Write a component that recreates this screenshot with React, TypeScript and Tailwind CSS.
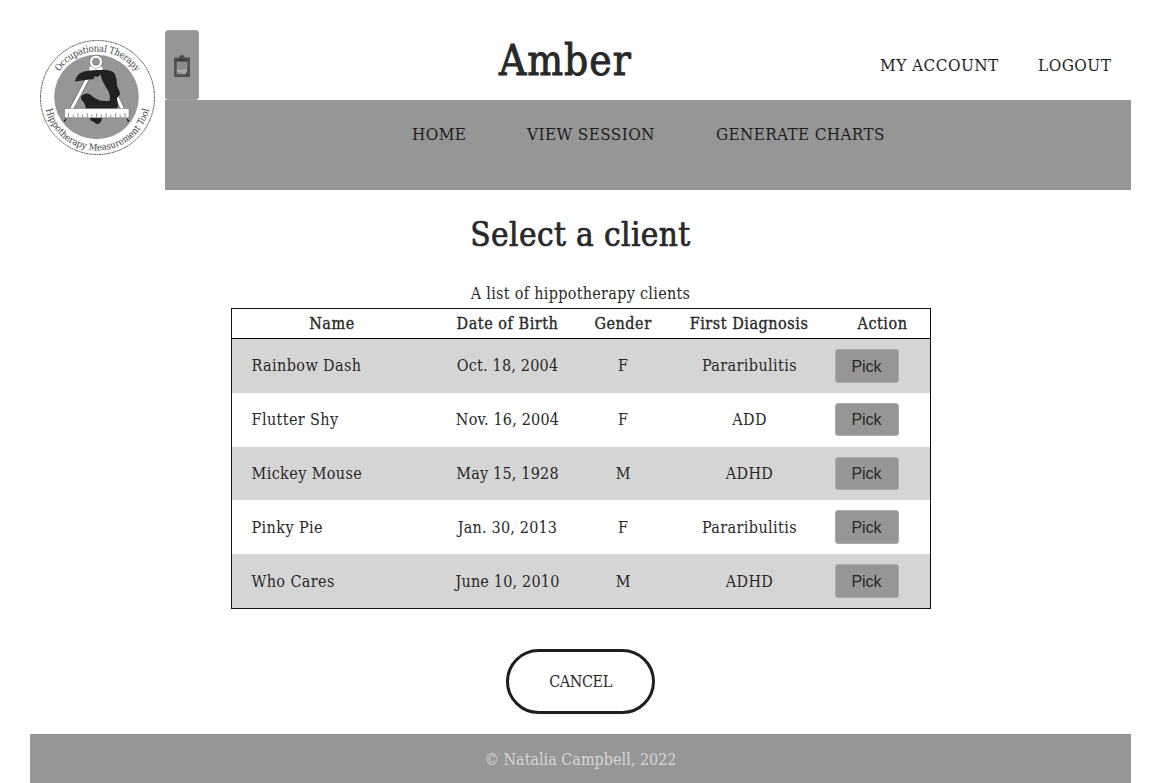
const clients = [
  { name: 'Rainbow Dash', dob: 'Oct. 18, 2004', gender: 'F', diagnosis: 'Pararibulitis' },
  { name: 'Flutter Shy', dob: 'Nov. 16, 2004', gender: 'F', diagnosis: 'ADD' },
  { name: 'Mickey Mouse', dob: 'May 15, 1928', gender: 'M', diagnosis: 'ADHD' },
  { name: 'Pinky Pie', dob: 'Jan. 30, 2013', gender: 'F', diagnosis: 'Pararibulitis' },
  { name: 'Who Cares', dob: 'June 10, 2010', gender: 'M', diagnosis: 'ADHD' },
];

function Logo() {
  const ticks = Array.from({ length: 13 }, (_, i) => 28.5 + i * 4.7);
  return (
    <svg viewBox="0 0 115 115" className="h-[115px] w-[115px]" aria-label="Occupational Therapy Hippotherapy Measurement Tool">
      <defs>
        <path id="upper" d="M 11.5 57.5 A 46 46 0 0 1 103.5 57.5" />
        <path id="lower" d="M 4.5 57.5 A 53 53 0 0 0 110.5 57.5" />
      </defs>
      <circle cx="57.5" cy="57.5" r="57" fill="#fff" stroke="#555" strokeWidth="1" strokeDasharray="2 .6" />
      <circle cx="56.5" cy="57" r="42.3" fill="#969696" />
      <text fontSize="9.4" fill="#444" fontFamily="'DejaVu Serif Condensed', 'DejaVu Serif', serif">
        <textPath href="#upper" startOffset="50%" textAnchor="middle" textLength="90">Occupational Therapy</textPath>
      </text>
      <text fontSize="9.4" fill="#444" fontFamily="'DejaVu Serif Condensed', 'DejaVu Serif', serif">
        <textPath href="#lower" startOffset="50%" textAnchor="middle" textLength="142">Hippotherapy Measurement Tool</textPath>
      </text>
      <path d="M50 34 L31 70 M66 34 L83 70" stroke="#666" strokeWidth="4.4" />
      <path d="M50 34 L31 70 M66 34 L83 70" stroke="#fff" strokeWidth="3" />
      <path d="M49 31 V27 L53 24 H60 L63 28 V31Z" fill="#fff" stroke="#777" strokeWidth=".5" />
      <circle cx="56" cy="21.7" r="5" fill="#969696" stroke="#666" strokeWidth="3.8" />
      <circle cx="56" cy="21.7" r="5" fill="none" stroke="#fff" strokeWidth="2.6" />
      <path d="M52 38 L59 34 L63 40 L70 52 L70 64 L58 62 L48 55 L44 52 Q47 45 52 38Z" fill="#969696" />
      <path d="M35 41.5 Q36 34 44 31.5 Q52 29.5 60 30 Q71 29 75 34 Q77 39 77 46 Q80 51 80 54.5 L77 58 L78 65 L77 69 H46 Q45 63 42.5 61 Q39.5 58 42 55.5 Q46 52 50 54.5 Q55 59 60 60.5 Q66 61 69.5 61 Q71 56 68 50.5 Q65 46 62 40 L60.5 34.5 L57.5 37 L55 36 L53.5 39 Q43 40 35 41.5Z" fill="#222" />
      <rect x="24.5" y="68.5" width="64.5" height="9.3" fill="#fff" stroke="#666" strokeWidth=".5" />
      {ticks.map((x, i) => (
        <path key={x} d={`M${x} 77 v-${i % 2 ? 2.5 : 4}`} stroke="#777" strokeWidth=".8" />
      ))}
      <path d="M50 78 H62 Q61 84 57 84.3 L53 81.5 Q50 81 50 78 M27 78 L23.5 80.5 L25 82Z M86 78 L89.5 80.5 L88 82Z" fill="#222" />
    </svg>
  );
}

export default function App() {
  return (
    <div className="flex h-[783px] flex-col overflow-hidden bg-white px-[30px] pt-[30px] font-['DejaVu_Serif_Condensed','DejaVu_Serif',serif] text-[#282828]">
      <header className="flex h-40 shrink-0">
        <div className="w-[135px] p-2.5"><Logo /></div>
        <div className="flex flex-1 flex-col">
          <div className="flex h-[70px]">
            <button className="flex h-[70px] w-[34px] items-center justify-center rounded-[3px] border border-[#a2a2a2] bg-[#969696]" aria-label="Clipboard">
              <svg viewBox="0 0 18 24" className="mt-0.5 h-6 w-[18px] shrink-0">
                <path d="M1 3.5 H6 Q6.5 1 9 1 Q11.5 1 12 3.5 H17 V23 H1Z" fill="#505050" />
                <path d="M3.7 7.7 H14.3 V18 L12 20.3 H3.7Z" fill="#8c8c8c" />
                <path d="M4 15 L8 16 L13 15 L14 17 L12 20 L8 18.5 L4 18Z" fill="#aaa" />
                <path d="M4.5 5.8 H13.5" stroke="#383838" strokeWidth="1.5" />
              </svg>
            </button>
            <h1 className="ml-[300px] w-[133px] whitespace-nowrap text-[42px] leading-[62px] tracking-[1px] [-webkit-text-stroke:0.9px_#282828]">Amber</h1>
            <nav className="ml-auto flex gap-10 pr-5 text-[17px] leading-[70px] tracking-[0.47px] text-[#1e1e1e]">
              <a className="w-[119px] whitespace-nowrap pl-px">MY ACCOUNT</a>
              <a className="w-[73px] whitespace-nowrap">LOGOUT</a>
            </nav>
          </div>
          <nav className="flex h-[90px] gap-[60px] bg-[#969696] pl-[247px] text-[17px] leading-[69px] tracking-[0.4px] text-[#1e1e1e]">
            <a className="w-[55px] whitespace-nowrap">HOME</a>
            <a className="w-[129px] whitespace-nowrap">VIEW SESSION</a>
            <a className="w-[169px] whitespace-nowrap tracking-[0.33px]">GENERATE CHARTS</a>
          </nav>
        </div>
      </header>
      <main className="flex h-[544px] shrink-0 flex-col items-center">
        <h2 className="mt-5 h-12 whitespace-nowrap text-[33px] leading-[49px] tracking-[0.4px] [-webkit-text-stroke:0.7px_#282828]">Select a client</h2>
        <p className="mt-6 h-[26px] text-base leading-[23px] tracking-[0.3px]">A list of hippotherapy clients</p>
        <table className="h-[301px] w-[700px] table-fixed border-separate border-spacing-0 border border-[#111] text-center text-base">
          <colgroup>
            <col className="w-[200px]" /><col className="w-[151px]" /><col className="w-[80px]" /><col className="w-[172px]" /><col className="w-[95px]" />
          </colgroup>
          <thead>
            <tr className="h-[30px] tracking-[0.55px] [-webkit-text-stroke:0.35px_#282828]">
              {['Name', 'Date of Birth', 'Gender', 'First Diagnosis', 'Action'].map((title) => (
                <th key={title} className="whitespace-nowrap border-b border-black p-0 pl-px font-normal leading-[29px]">{title}</th>
              ))}
            </tr>
          </thead>
          <tbody>
            {clients.map((client) => (
              <tr key={client.name} className="h-[53.8px] odd:bg-[#d5d5d5]">
                <td className="p-0 pl-5 pt-[1.2px] text-left tracking-[0.4px]">{client.name}</td>
                <td className="p-0 pl-px pt-[1.2px] tracking-[0.2px]">{client.dob}</td>
                <td className="p-0 pl-px pt-[1.2px]">{client.gender}</td>
                <td className="p-0 pl-0.5 pt-[1.2px] tracking-[0.4px]">{client.diagnosis}</td>
                <td className="p-0 text-left">
                  <button className="block h-[33.6px] w-16 rounded-[3px] border border-[#aaa] bg-[#969696] pt-[0.5px] font-['Liberation_Sans',sans-serif] text-base leading-8">Pick</button>
                </td>
              </tr>
            ))}
          </tbody>
        </table>
        <button className="mt-10 h-[65px] w-[149px] rounded-full border-[3px] border-[#1e1e1e] text-base tracking-[-0.4px]">CANCEL</button>
      </main>
      <footer className="h-[49px] shrink-0 bg-[#969696] text-center text-base leading-[52px] text-[#d5d5d5]">© Natalia Campbell, 2022</footer>
    </div>
  );
}
